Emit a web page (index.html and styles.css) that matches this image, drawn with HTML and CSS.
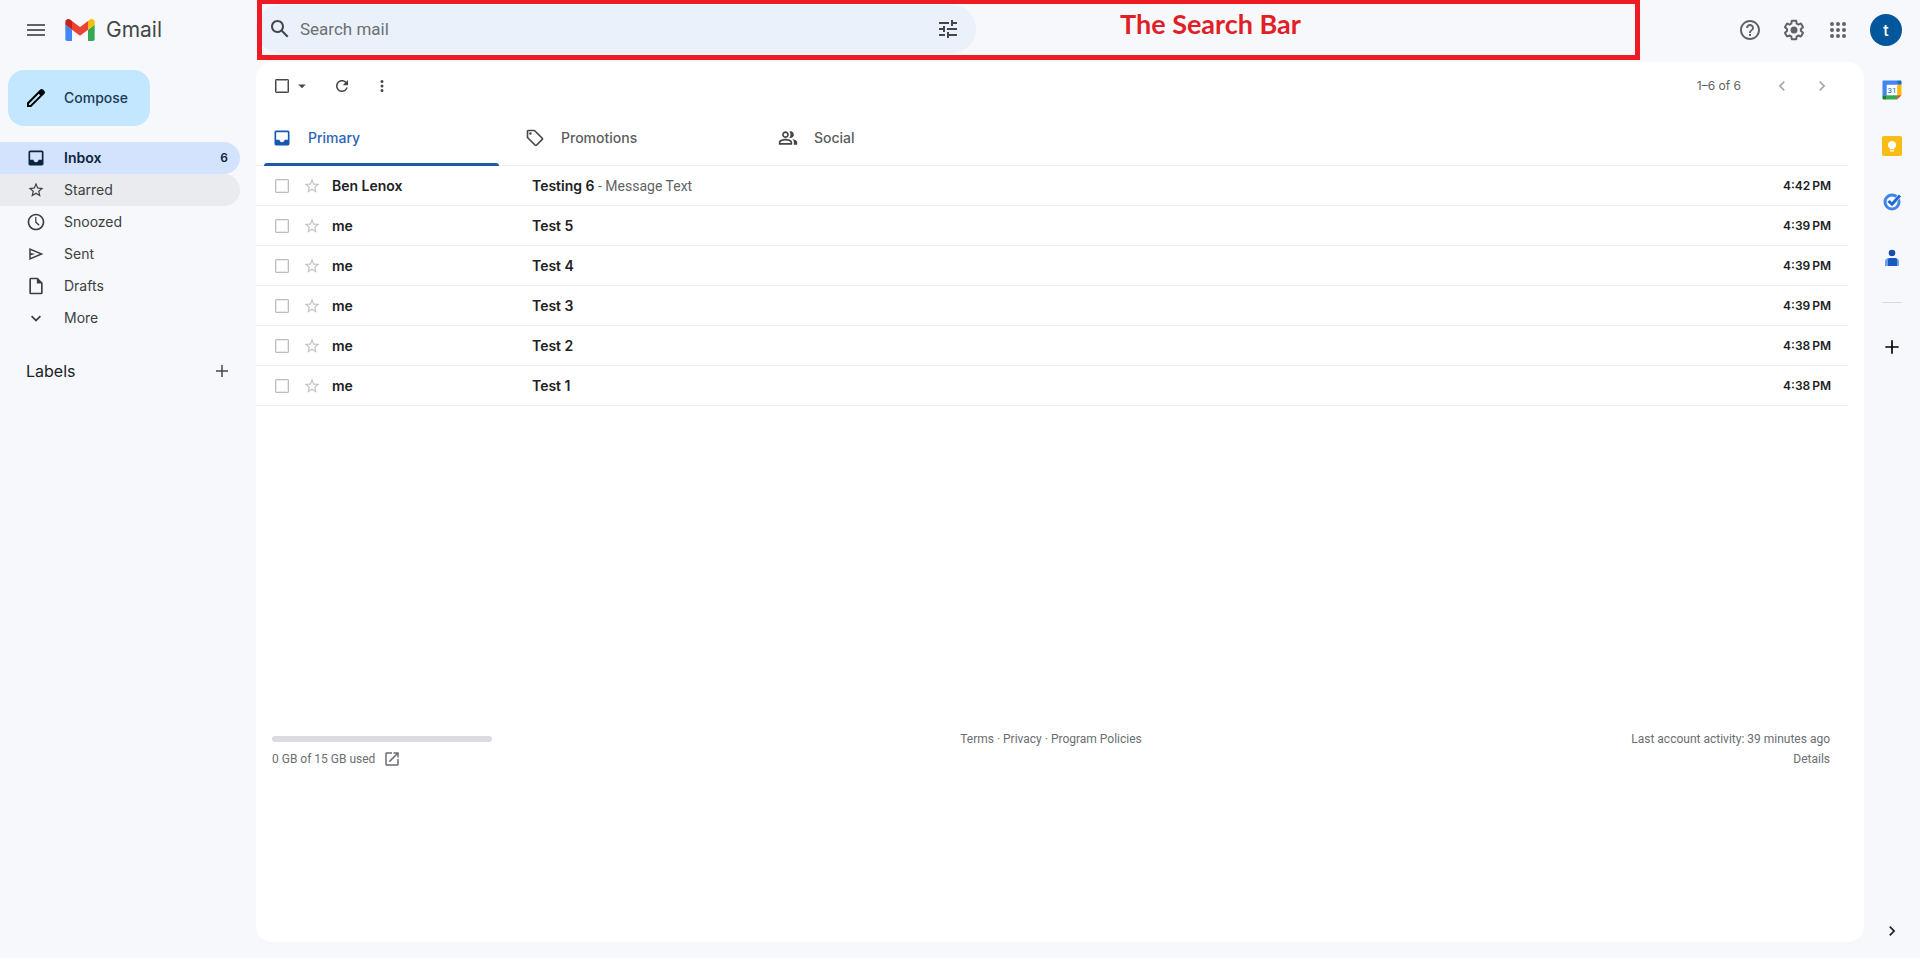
FILE: index.html
```html
<!DOCTYPE html>
<html lang="en">
<head>
<meta charset="utf-8">
<meta name="viewport" content="width=device-width, initial-scale=1">
<title>Inbox - Gmail</title>
<link rel="stylesheet" href="styles.css">
</head>
<body>
<svg class="sprite" aria-hidden="true">
  <symbol id="star" viewBox="0 0 24 24"><path d="M22 9.24l-7.19-.62L12 2 9.19 8.63 2 9.24l5.46 4.73L5.82 21 12 17.27 18.18 21l-1.63-7.03L22 9.24zM12 15.4l-3.76 2.27 1-4.28-3.32-2.88 4.38-.38L12 6.1l1.71 4.04 4.38.38-3.32 2.88 1 4.28L12 15.4z"/></symbol>
  <symbol id="inbox" viewBox="0 0 24 24"><path d="M19 3H5c-1.1 0-2 .9-2 2v14c0 1.100.9 2 2 2h14c1.100 0 2-.9 2-2V5c0-1.100-.9-2-2-2zm0 11h-4c0 1.660-1.350 3-3 3s-3-1.340-3-3H5V5h14v9z"/></symbol>
  <symbol id="plus" viewBox="0 0 24 24"><path d="M20 13h-7v7h-2v-7H4v-2h7V4h2v7h7v2z"/></symbol>
  <symbol id="left" viewBox="0 0 24 24"><path d="M15.410 7.410L14 6l-6 6 6 6 1.410-1.410L10.830 12z"/></symbol>
  <symbol id="right" viewBox="0 0 24 24"><path d="M8.590 16.590L10 18l6-6-6-6-1.410 1.410L13.170 12z"/></symbol>
</svg>

<div class="app">
  <header class="header">
    <div class="brand">
      <button class="icon-button" type="button" aria-label="Main menu"><svg class="i24" viewBox="0 0 24 24"><path d="M3 18h18v-2H3v2zm0-5h18v-2H3v2zm0-7v2h18V6H3z"/></svg></button>
      <a class="logo" href="#">
        <svg class="logo-mark" viewBox="52 42 88 66" aria-hidden="true"><path fill="#4285f4" d="M58 108h14V74L52 59v43c0 3.320 2.690 6 6 6"/><path fill="#34a853" d="M120 108h14c3.320 0 6-2.690 6-6V59l-20 15"/><path fill="#fbbc04" d="M120 48v26l20-15v-8c0-7.420-8.470-11.650-14.400-7.200"/><path fill="#ea4335" d="M72 74V48l24 18 24-18v26L96 92"/><path fill="#c5221f" d="M52 51v8l20 15V48l-5.600-4.200c-5.940-4.450-14.400-.220-14.400 7.200"/></svg>
        <span>Gmail</span>
      </a>
    </div>
    <div class="search-area">
      <form class="search" role="search">
        <button class="icon-button" type="button" aria-label="Search"><svg class="i24" viewBox="0 0 24 24"><path d="M20.490 19l-5.730-5.730C15.530 12.200 16 10.910 16 9.500 16 5.910 13.090 3 9.500 3S3 5.910 3 9.500 5.910 16 9.500 16c1.410 0 2.700-.470 3.770-1.240L19 20.490 20.490 19zM5 9.500C5 7.010 7.010 5 9.500 5S14 7.010 14 9.500 11.990 14 9.500 14 5 11.990 5 9.500z"/></svg></button>
        <input class="search-input" type="text" placeholder="Search mail" aria-label="Search mail">
        <button class="icon-button" type="button" aria-label="Show search options"><svg class="i24" viewBox="0 0 24 24"><path d="M3 17v2h6v-2H3zM3 5v2h10V5H3zm10 16v-2h8v-2h-8v-2h-2v6h2zM7 9v2H3v2h4v2h2V9H7zm14 4v-2H11v2h10zm-6-4h2V7h4V5h-4V3h-2v6z"/></svg></button>
      </form>
      <strong class="callout">The Search Bar</strong>
    </div>
    <div class="account">
      <button class="icon-button" type="button" aria-label="Support"><svg class="i24" viewBox="0 0 24 24"><path d="M11 18h2v-2h-2v2zm1-16C6.480 2 2 6.480 2 12s4.480 10 10 10 10-4.480 10-10S17.520 2 12 2zm0 18c-4.410 0-8-3.590-8-8s3.590-8 8-8 8 3.590 8 8-3.590 8-8 8zm0-14c-2.210 0-4 1.790-4 4h2c0-1.100.9-2 2-2s2 .9 2 2c0 2-3 1.750-3 5h2c0-2.250 3-2.500 3-5 0-2.210-1.790-4-4-4z"/></svg></button>
      <button class="icon-button" type="button" aria-label="Settings"><svg class="i24" viewBox="0 0 24 24"><path d="M13.850 22.250h-3.700c-.740 0-1.360-.540-1.450-1.270l-.270-1.890c-.270-.140-.530-.290-.790-.460l-1.800.720c-.700.260-1.470-.030-1.810-.650L2.200 15.530c-.350-.660-.200-1.440.360-1.880l1.530-1.190c-.010-.150-.020-.300-.020-.460 0-.150.010-.310.020-.460l-1.520-1.190c-.590-.450-.740-1.260-.370-1.880l1.850-3.190c.340-.620 1.110-.900 1.790-.630l1.810.730c.260-.170.520-.320.780-.460l.270-1.910c.090-.700.710-1.250 1.440-1.250h3.700c.740 0 1.360.540 1.450 1.270l.270 1.890c.270.140.530.290.790.460l1.800-.720c.710-.260 1.480.030 1.820.650l1.840 3.180c.360.660.200 1.440-.360 1.880l-1.520 1.190c.010.150.020.300.020.460s-.010.310-.020.460l1.520 1.190c.560.450.720 1.230.370 1.860l-1.860 3.220c-.340.620-1.110.900-1.800.630l-1.800-.720c-.260.170-.520.320-.780.460l-.270 1.910c-.100.680-.720 1.220-1.460 1.220zm-3.230-2h2.760l.370-2.550.530-.220c.440-.180.880-.440 1.340-.780l.450-.340 2.380.960 1.380-2.400-2.030-1.580.070-.560c.030-.260.060-.510.060-.780s-.030-.530-.060-.780l-.070-.560 2.030-1.580-1.390-2.400-2.390.960-.450-.350c-.420-.320-.870-.580-1.330-.770l-.520-.220-.370-2.550h-2.760l-.370 2.550-.530.210c-.440.190-.880.440-1.340.790l-.450.330-2.380-.950-1.390 2.390 2.030 1.580-.070.560a7 7 0 0 0-.060.790c0 .260.020.530.060.780l.070.560-2.030 1.580 1.380 2.400 2.390-.960.450.350c.430.330.860.580 1.330.770l.530.220.380 2.550z"/><circle cx="12" cy="12" r="3.500"/></svg></button>
      <button class="icon-button" type="button" aria-label="Google apps"><svg class="i24" viewBox="0 0 24 24"><path d="M6 8a2 2 0 100-4 2 2 0 000 4zm6 12a2 2 0 100-4 2 2 0 000 4zm-6 0a2 2 0 100-4 2 2 0 000 4zm0-6a2 2 0 100-4 2 2 0 000 4zm6 0a2 2 0 100-4 2 2 0 000 4zm6-6a2 2 0 100-4 2 2 0 000 4zm-6 0a2 2 0 100-4 2 2 0 000 4zm6 6a2 2 0 100-4 2 2 0 000 4zm0 6a2 2 0 100-4 2 2 0 000 4z"/></svg></button>
      <button class="avatar" type="button" aria-label="Google Account">t</button>
    </div>
  </header>

  <div class="body">
    <aside class="sidebar">
      <button class="compose" type="button"><svg class="i24" viewBox="0 0 24 24"><path d="M20.410 4.940l-1.350-1.350c-.780-.780-2.050-.780-2.830 0L3 16.820V21h4.180L20.410 7.770c.790-.780.790-2.050 0-2.830zm-14 14.120L5 19v-1.360l9.820-9.820 1.410 1.410-9.820 9.830z"/></svg>Compose</button>
      <nav class="folders" aria-label="Folders">
        <a class="folder folder-active" href="#"><svg class="i20"><use href="#inbox"/></svg><span>Inbox</span><span class="badge">6</span></a>
        <a class="folder folder-hover" href="#"><svg class="i18"><use href="#star"/></svg><span>Starred</span></a>
        <a class="folder" href="#"><svg class="i20" viewBox="0 0 24 24"><path d="M12 2C6.500 2 2 6.500 2 12s4.500 10 10 10 10-4.500 10-10S17.500 2 12 2zm0 18c-4.400 0-8-3.600-8-8s3.600-8 8-8 8 3.600 8 8-3.600 8-8 8zM12.500 6H11v6.500l4.300 4 1.100-1.200-3.900-3.600z"/></svg><span>Snoozed</span></a>
        <a class="folder" href="#"><svg class="i18" viewBox="0 0 24 24"><path d="M3 20V4l19 8-19 8zm2-3l11.850-5L5 7v3.500l6 1.500-6 1.500V17z"/></svg><span>Sent</span></a>
        <a class="folder" href="#"><svg class="i20" viewBox="0 0 24 24"><path d="M14 2H6c-1.100 0-2 .9-2 2v16c0 1.100.9 2 2 2h12c1.100 0 2-.9 2-2V8l-6-6zM6 20V4h7v5h5v11H6z"/></svg><span>Drafts</span></a>
        <a class="folder" href="#"><svg class="i20" viewBox="0 0 24 24"><path d="M12 16.400l-6-6L7.400 9l4.600 4.600L16.600 9l1.400 1.400z"/></svg><span>More</span></a>
      </nav>
      <div class="labels">
        <h2>Labels</h2>
        <button class="icon-button label-add" type="button" aria-label="Create new label"><svg class="i18"><use href="#plus"/></svg></button>
      </div>
    </aside>

    <main class="panel">
      <div class="toolbar">
        <div class="select-all">
          <input class="check check-dark" type="checkbox" aria-label="Select all">
          <button class="caret" type="button" aria-label="Select options"><svg class="i18" viewBox="0 0 24 24"><path d="M7 10l5 5 5-5z"/></svg></button>
        </div>
        <button class="icon-button" type="button" aria-label="Refresh"><svg class="i18" viewBox="0 0 24 24"><path d="M17.650 6.350C16.200 4.900 14.210 4 12 4c-4.420 0-7.990 3.580-7.990 8s3.570 8 7.990 8c3.730 0 6.840-2.550 7.730-6h-2.080c-.820 2.330-3.040 4-5.650 4-3.310 0-6-2.690-6-6s2.690-6 6-6c1.660 0 3.140.690 4.220 1.780L13 11h7V4l-2.350 2.350z"/></svg></button>
        <button class="icon-button" type="button" aria-label="More"><svg class="i18" viewBox="0 0 24 24"><path d="M12 8a2 2 0 100-4 2 2 0 000 4zm0 2a2 2 0 100 4 2 2 0 000-4zm0 6a2 2 0 100 4 2 2 0 000-4z"/></svg></button>
        <span class="count">1–6 of 6</span>
        <button class="icon-button faint" type="button" aria-label="Newer"><svg class="i20"><use href="#left"/></svg></button>
        <button class="icon-button faint" type="button" aria-label="Older"><svg class="i20"><use href="#right"/></svg></button>
      </div>

      <div class="tabs" role="tablist">
        <button class="tab tab-active" type="button" role="tab" aria-selected="true"><svg class="i20"><use href="#inbox"/></svg>Primary</button>
        <button class="tab" type="button" role="tab" aria-selected="false"><svg class="i20" viewBox="0 0 24 24"><path d="M21.410 11.580l-9-9C12.050 2.220 11.550 2 11 2H4c-1.100 0-2 .9-2 2v7c0 .550.220 1.050.590 1.420l9 9c.360.360.860.580 1.410.580s1.050-.220 1.410-.590l7-7c.370-.360.590-.860.590-1.410s-.230-1.060-.590-1.420zM13 20.010L4 11V4h7v-.010l9 9-7 7.020z"/><circle cx="6.500" cy="6.500" r="1.500"/></svg>Promotions</button>
        <button class="tab" type="button" role="tab" aria-selected="false"><svg class="i20" viewBox="0 0 24 24"><path d="M9 12c2.210 0 4-1.790 4-4s-1.790-4-4-4-4 1.790-4 4 1.790 4 4 4zm0-6c1.100 0 2 .9 2 2s-.9 2-2 2-2-.9-2-2 .9-2 2-2zm0 7c-2.670 0-8 1.340-8 4v3h16v-3c0-2.660-5.330-4-8-4zm6 5H3v-.990C3.200 16.290 6.300 15 9 15s5.800 1.290 6 2v1zm0-6c2.210 0 4-1.790 4-4s-1.790-4-4-4c-.470 0-.910.100-1.330.240C14.500 5.270 15 6.580 15 8s-.500 2.730-1.330 3.760c.420.140.860.240 1.330.240zm4 8h4v-3c0-2.160-3.500-3.460-6.260-3.860C18.120 14.020 19 15.290 19 17z"/></svg>Social</button>
      </div>

      <div class="mail-list">
        <table class="mail">
          <colgroup><col class="c-check"><col class="c-star"><col class="c-from"><col><col class="c-time"></colgroup>
          <tbody>
            <tr><td class="cell-check"><input class="check" type="checkbox" aria-label="Select Testing 6"></td><td><button class="star" type="button" aria-label="Star"><svg class="i18"><use href="#star"/></svg></button></td><td class="from">Ben Lenox</td><td class="subject">Testing 6<span class="snippet"> - Message Text</span></td><td class="time">4:42&#8239;PM</td></tr>
            <tr><td class="cell-check"><input class="check" type="checkbox" aria-label="Select Test 5"></td><td><button class="star" type="button" aria-label="Star"><svg class="i18"><use href="#star"/></svg></button></td><td class="from">me</td><td class="subject">Test 5</td><td class="time">4:39&#8239;PM</td></tr>
            <tr><td class="cell-check"><input class="check" type="checkbox" aria-label="Select Test 4"></td><td><button class="star" type="button" aria-label="Star"><svg class="i18"><use href="#star"/></svg></button></td><td class="from">me</td><td class="subject">Test 4</td><td class="time">4:39&#8239;PM</td></tr>
            <tr><td class="cell-check"><input class="check" type="checkbox" aria-label="Select Test 3"></td><td><button class="star" type="button" aria-label="Star"><svg class="i18"><use href="#star"/></svg></button></td><td class="from">me</td><td class="subject">Test 3</td><td class="time">4:39&#8239;PM</td></tr>
            <tr><td class="cell-check"><input class="check" type="checkbox" aria-label="Select Test 2"></td><td><button class="star" type="button" aria-label="Star"><svg class="i18"><use href="#star"/></svg></button></td><td class="from">me</td><td class="subject">Test 2</td><td class="time">4:38&#8239;PM</td></tr>
            <tr><td class="cell-check"><input class="check" type="checkbox" aria-label="Select Test 1"></td><td><button class="star" type="button" aria-label="Star"><svg class="i18"><use href="#star"/></svg></button></td><td class="from">me</td><td class="subject">Test 1</td><td class="time">4:38&#8239;PM</td></tr>
          </tbody>
        </table>
      </div>

      <footer class="footer">
        <div class="storage">
          <div class="meter"></div>
          <a class="usage" href="#">0 GB of 15 GB used <svg class="i18" viewBox="0 0 24 24"><path d="M19 19H5V5h7V3H5c-1.110 0-2 .9-2 2v14c0 1.100.890 2 2 2h14c1.100 0 2-.9 2-2v-7h-2v7zM14 3v2h3.590l-9.830 9.830 1.410 1.410L19 6.410V10h2V3h-7z"/></svg></a>
        </div>
        <div class="legal"><a href="#">Terms</a> · <a href="#">Privacy</a> · <a href="#">Program Policies</a></div>
        <div class="activity"><div>Last account activity: 39 minutes ago</div><a href="#">Details</a></div>
      </footer>
    </main>

    <aside class="rail" aria-label="Side panel">
      <button class="rail-button" type="button" aria-label="Calendar"><svg class="i20" viewBox="0 0 20 20"><path fill="#fff" d="M4 4h12v12H4z"/><path fill="#4285f4" d="M1.500.5H15.200v4.200H4.700v10.600H.5V1.500a1 1 0 011-1z"/><path fill="#1967d2" d="M15.200.5h3.300a1 1 0 011 1v3.200h-4.300z"/><path fill="#fbbc04" d="M15.200 4.700h4.300v10.600h-4.300z"/><path fill="#34a853" d="M4.700 15.300h10.500v4.200H4.700z"/><path fill="#188038" d="M.5 15.300h4.200v4.200H1.500a1 1 0 01-1-1z"/><path fill="#ea4335" d="M15.200 15.300h4.300l-4.300 4.200z"/><text x="10" y="13" text-anchor="middle" class="cal-day">31</text></svg></button>
      <button class="rail-button" type="button" aria-label="Keep"><svg class="i20" viewBox="0 0 20 20"><rect width="20" height="20" rx="2" fill="#f9bc15"/><path fill="#fff" d="M10 5a4 4 0 00-2.300 7.300v1h4.600v-1A4 4 0 0010 5zM8 14.200h4v1.400H8z"/></svg></button>
      <button class="rail-button" type="button" aria-label="Tasks"><svg class="i20" viewBox="0 0 20 20"><circle cx="10" cy="10" r="7" fill="none" stroke="#3f86e8" stroke-width="3"/><path d="M6.300 9.500l3.600 3 7.600-8.500" fill="none" stroke="#f7f9fd" stroke-width="4"/><path d="M6.500 9l3.500 3.200 8-8.700" fill="none" stroke="#2468d8" stroke-width="3"/></svg></button>
      <button class="rail-button" type="button" aria-label="Contacts"><svg class="i20" viewBox="0 0 20 20"><circle cx="10" cy="5" r="3.300" fill="#174ea6"/><path fill="#6f9df2" d="M3 18v-4a4 4 0 014-4h6a4 4 0 014 4v2.500a1.500 1.500 0 01-1.500 1.500z"/><path fill="#185abc" d="M6 18v-6a2 2 0 012-2h5a2 2 0 012 2v6z"/></svg></button>
      <hr>
      <button class="rail-button rail-add" type="button" aria-label="Get add-ons"><svg class="i20"><use href="#plus"/></svg></button>
      <button class="rail-button rail-hide" type="button" aria-label="Hide side panel"><svg class="i20"><use href="#right"/></svg></button>
    </aside>
  </div>
</div>
</body>
</html>
```

FILE: styles.css
```css
* { box-sizing: border-box; }

body {
  margin: 0;
  background: #f6f8fc;
  color: #202124;
  font-family: Inter, Roboto, "Liberation Sans", sans-serif;
  font-size: 14px;
  line-height: 20px;
}

a { color: inherit; text-decoration: none; }
svg { display: block; flex: none; fill: currentColor; }
button, input { font: inherit; color: inherit; }
button { padding: 0; border: 0; background: none; cursor: pointer; }

.sprite { display: none; }
.i18 { width: 18px; height: 18px; }
.i20 { width: 20px; height: 20px; }
.i24 { width: 24px; height: 24px; }

.app { display: flex; flex-direction: column; min-height: 100vh; }

.icon-button {
  display: grid;
  place-items: center;
  width: 40px;
  height: 40px;
  color: #444746;
}

/* Header */
.header { display: flex; height: 62px; }

.brand {
  display: flex;
  align-items: center;
  width: 256px;
  padding: 0 16px 2px;
  gap: 9px;
}
.brand .icon-button { color: #5f6368; }
.logo { display: flex; align-items: center; gap: 11px; color: #444746; font-size: 21px; line-height: 24px; }
.logo-mark { width: 30px; height: 22px; }

.search-area {
  position: relative;
  display: flex;
  flex: 1;
  align-items: flex-start;
  padding-top: 5px;
}
.search-area::after {
  content: "";
  position: absolute;
  inset: 0 0 2px 1px;
  border: 5px solid #ed1c24;
  border-top-width: 4px;
  pointer-events: none;
}
.search {
  display: flex;
  align-items: center;
  flex: 0 1 720px;
  height: 48px;
  padding: 0 8px 0 4px;
  border-radius: 24px;
  background: #eaf1fb;
}
.search-input {
  flex: 1;
  min-width: 0;
  padding: 0;
  border: 0;
  outline: 0;
  background: none;
  font-family: Roboto, sans-serif;
  font-size: 17px;
}
.search-input::placeholder { color: #6b6f72; opacity: 1; }
.callout {
  margin-left: 144px;
  color: #e01f27;
  font-family: Lato, sans-serif;
  font-size: 27px;
  line-height: 38px;
  white-space: nowrap;
}

.account {
  display: flex;
  align-items: center;
  justify-content: flex-end;
  width: 280px;
  padding: 0 18px 2px 0;
  gap: 4px;
}
.account .icon-button { color: #5f6368; }
.avatar {
  width: 32px;
  height: 32px;
  margin-left: 8px;
  border-radius: 50%;
  background: #01579b;
  color: #fff;
  font-size: 16px;
  font-weight: 500;
}

/* Sidebar */
.body { display: flex; flex: 1; }
.sidebar { width: 256px; padding-top: 8px; }
.compose {
  display: flex;
  align-items: center;
  gap: 16px;
  height: 56px;
  margin-left: 8px;
  padding: 0 22px 0 16px;
  border-radius: 16px;
  background: #c2e7ff;
  color: #1b3a55;
  font-weight: 500;
}
.compose svg { color: #000; }
.folders { width: 240px; margin-top: 16px; }
.folder {
  display: grid;
  grid-template-columns: 20px 1fr auto;
  align-items: center;
  justify-items: start;
  gap: 18px;
  height: 32px;
  padding: 0 12px 0 26px;
  border-radius: 0 16px 16px 0;
  color: #3c3f42;
}
.folder svg { justify-self: center; }
.folder-active { background: #d3e3fd; color: #0b2540; font-weight: 600; }
.folder-hover { background: #e9ebee; }
.badge { font-size: 12px; }
.labels {
  display: flex;
  align-items: center;
  justify-content: space-between;
  width: 240px;
  margin-top: 17px;
  padding: 0 0 0 26px;
}
.labels h2 { margin: 0; color: #202124; font-size: 16px; font-weight: 400; }
.label-add { width: 36px; }

/* Mail panel */
.panel {
  flex: 1;
  min-width: 0;
  margin-bottom: 16px;
  padding-right: 16px;
  border-radius: 16px;
  background: #fff;
}
.toolbar { display: flex; align-items: center; height: 48px; padding: 0 6px 0 19px; }
.select-all { display: flex; align-items: center; gap: 4px; margin-right: 11px; }
.check {
  appearance: none;
  display: block;
  width: 14px;
  height: 14px;
  margin: 0;
  border: 1px solid #bcbec1;
  border-radius: 1px;
  box-shadow: inset 0 0 0 1px #e8e9ea;
}
.check-dark { border-color: #444746; box-shadow: inset 0 0 0 1px #a3a5a4; }
.caret { color: #444746; }
.count { margin-left: auto; margin-right: 21px; color: #5f6368; font-size: 12px; }
.faint { color: #a6a8aa; }

.tabs { display: flex; height: 56px; border-bottom: 1px solid #eceeef; }
.tab {
  position: relative;
  display: flex;
  align-items: center;
  gap: 16px;
  width: 253px;
  padding: 0 16px;
  color: #5a5d60;
  font-weight: 500;
}
.tab svg { color: #444746; }
.tab-active { color: #2a64b8; }
.tab-active svg { color: #1558b0; }
.tab-active::after {
  content: "";
  position: absolute;
  inset: auto 10px -1px 8px;
  height: 3px;
  border-radius: 3px 3px 0 0;
  background: #1d59a8;
}

.mail-list { min-height: 563px; }
.mail { width: 100%; border-collapse: separate; border-spacing: 0; table-layout: fixed; }
.c-check { width: 47px; }
.c-star { width: 29px; }
.c-from { width: 200px; }
.c-time { width: 120px; }
.mail td { height: 40px; padding: 0; border-bottom: 1px solid #eceeef; }
.mail .cell-check { padding-left: 19px; }
.star { display: block; color: #c2c4c6; }
.from, .subject { font-weight: 600; }
.snippet { color: #5f6368; font-family: Roboto, sans-serif; font-weight: 400; }
.mail .time { padding-right: 17px; font-size: 12px; font-weight: 600; text-align: right; }

.footer {
  display: grid;
  grid-template-columns: 1fr auto 1fr;
  padding: 0 18px 0 16px;
  color: #6b6e71;
  font-family: Roboto, sans-serif;
  font-size: 12px;
}
.storage { padding-top: 7px; }
.meter { width: 220px; height: 6px; border-radius: 3px; background: #dadce0; }
.usage { display: flex; align-items: center; gap: 8px; margin-top: 7px; }
.activity { text-align: right; }

/* Side rail */
.rail {
  display: flex;
  flex-direction: column;
  align-items: center;
  width: 56px;
  padding-bottom: 7px;
}
.rail-button { display: grid; place-items: center; width: 56px; height: 56px; }
.cal-day { fill: #1967d2; font-family: Roboto, sans-serif; font-size: 8px; }
.rail hr { width: 20px; margin: 16px 0; border: 0; border-top: 1px solid #dadce0; }
.rail-add { color: #000; }
.rail-hide { height: 40px; margin-top: auto; }
```
